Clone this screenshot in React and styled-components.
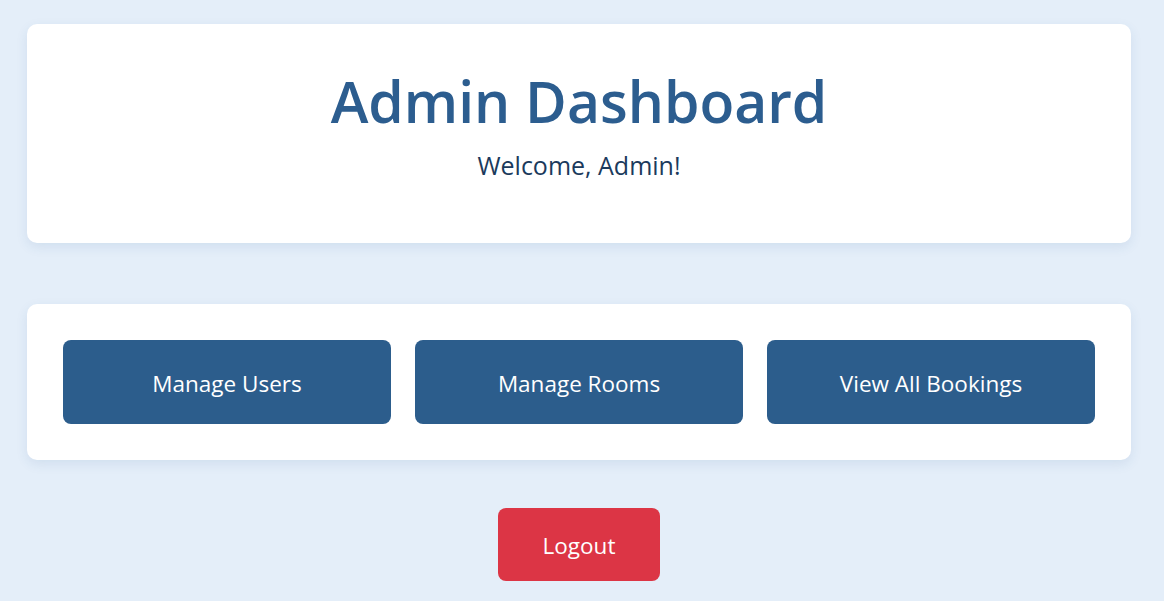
import React from "react";
import styled, { createGlobalStyle } from "styled-components";

const Global = createGlobalStyle`
  html, body { margin: 0; padding: 0; }
  body {
    background: #e4eef9;
    font-family: "Open Sans", "Noto Sans", sans-serif;
  }
`;

const Page = styled.div`
  padding: 24px 33px 20px 27px;
  display: flex;
  flex-direction: column;
  align-items: stretch;
`;

const Card = styled.section`
  background: #ffffff;
  border-radius: 10px;
  box-shadow: 0 4px 12px rgba(44, 93, 143, 0.1);
`;

const Header = styled(Card)`
  height: 219px;
  box-sizing: border-box;
  padding-top: 39px;
  text-align: center;
`;

const Title = styled.h1`
  margin: 0;
  font-size: 57px;
  line-height: 76px;
  font-weight: 600;
  color: #2c5d8f;
`;

const Welcome = styled.p`
  margin: 11px 0 0;
  font-size: 25px;
  line-height: 30px;
  color: #1b3a5c;
`;

const Actions = styled(Card)`
  margin-top: 61px;
  padding: 36px;
  display: grid;
  grid-template-columns: repeat(3, 1fr);
  gap: 24px;
`;

const ActionButton = styled.button`
  height: 84px;
  border: none;
  border-radius: 8px;
  background: #2c5d8c;
  color: #ffffff;
  font-family: inherit;
  font-size: 22.5px;
  padding-top: 3px;
  cursor: pointer;
`;

const LogoutRow = styled.div`
  margin-top: 48px;
  display: flex;
  justify-content: center;
`;

const LogoutButton = styled.button`
  width: 162px;
  height: 73px;
  border: none;
  border-radius: 8px;
  background: #dc3545;
  color: #ffffff;
  font-family: inherit;
  font-size: 22.5px;
  padding-top: 3px;
  cursor: pointer;
`;

export default function App() {
  return (
    <>
      <Global />
      <Page>
        <Header>
          <Title>Admin Dashboard</Title>
          <Welcome>Welcome, Admin!</Welcome>
        </Header>
        <Actions>
          <ActionButton>Manage Users</ActionButton>
          <ActionButton>Manage Rooms</ActionButton>
          <ActionButton>View All Bookings</ActionButton>
        </Actions>
        <LogoutRow>
          <LogoutButton>Logout</LogoutButton>
        </LogoutRow>
      </Page>
    </>
  );
}
